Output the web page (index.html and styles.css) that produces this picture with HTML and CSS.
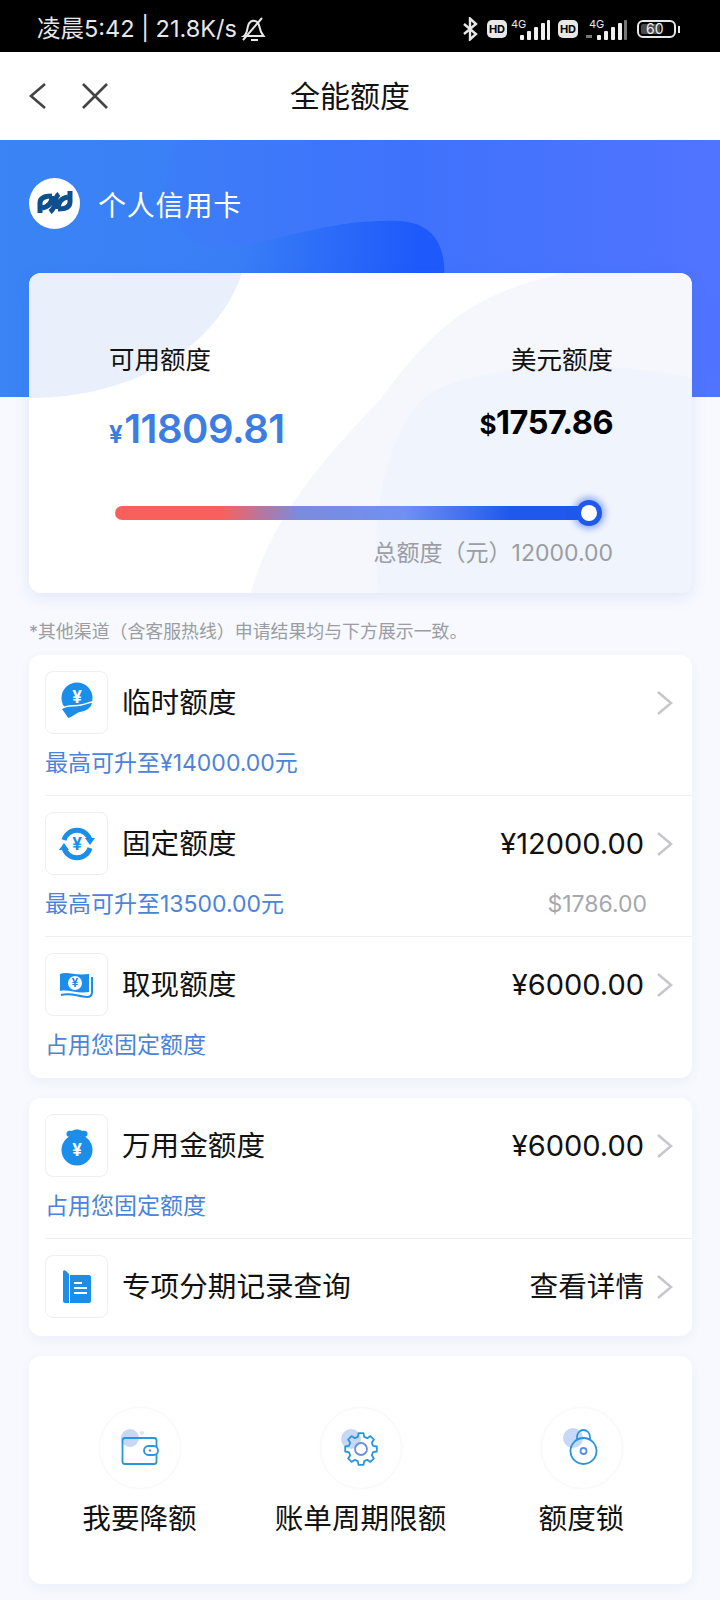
FILE: index.html
```html
<!DOCTYPE html>
<html lang="zh-CN">
<head>
    <meta charset="UTF-8">
    <meta name="viewport" content="width=device-width, initial-scale=1.0">
    <title>全能额度</title>
    <link rel="stylesheet" href="styles.css">
</head>
<body>
    <div class="status-bar">
        <div class="status-left">
            <span>凌晨5:42 | 21.8K/s</span>
            <svg width="26" height="28" viewBox="0 0 26 28" fill="none" stroke="#e8e8e8" stroke-width="2">
                <path d="M3 21c3-2 3-6 4-10 1-4 4-6 7-5 3 .6 4 3 4.500 6 .5 3 1.500 6 4 9z"/>
                <path d="M2 25L21 3M10 25h7"/>
            </svg>
        </div>
        <div class="status-right">
            <svg width="15" height="24" viewBox="0 0 15 24" fill="none" stroke="#e8e8e8" stroke-width="2.400">
                <path d="M1 7l12 10-6 5.500V1.500L13 7 1 17"/>
            </svg>
            <span class="hd">HD</span>
            <svg width="40" height="24" viewBox="0 0 40 24">
                <text x="0" y="11" class="sig-text">4G</text>
                <g fill="#f0f0f0">
                    <rect x="9" y="18" width="4" height="5" rx="1"/>
                    <rect x="16" y="14" width="4" height="9" rx="1"/>
                    <rect x="23" y="10" width="4" height="13" rx="1"/>
                    <rect x="30" y="6" width="4" height="17" rx="1"/>
                    <rect x="36" y="3" width="3" height="20" rx="1"/>
                </g>
            </svg>
            <span class="hd hd-second">HD</span>
            <svg width="42" height="24" viewBox="0 0 42 24">
                <text x="3" y="11" class="sig-text">4G</text>
                <rect x="0" y="18" width="6" height="3" fill="#777"/>
                <g fill="#f0f0f0">
                    <rect x="11" y="18" width="4" height="5" rx="1"/>
                    <rect x="18" y="14" width="4" height="9" rx="1"/>
                    <rect x="25" y="10" width="4" height="13" rx="1"/>
                    <rect x="32" y="6" width="4" height="17" rx="1"/>
                </g>
                <rect x="38" y="3" width="3" height="20" rx="1" fill="#777"/>
            </svg>
            <div class="battery"><span>60</span></div>
            <i class="battery-nub"></i>
        </div>
    </div>

    <div class="nav">
        <svg class="nav-icon" width="20" height="28" viewBox="0 0 20 28" fill="none" stroke="#444" stroke-width="2.600">
            <path d="M17 2L3 14l14 12"/>
        </svg>
        <svg class="nav-icon nav-close" width="28" height="28" viewBox="0 0 28 28" fill="none" stroke="#444" stroke-width="2.600">
            <path d="M2 2l24 24M26 2L2 26"/>
        </svg>
        <h1>全能额度</h1>
    </div>

    <div class="hero">
        <svg class="hero-shape" width="720" height="257" viewBox="0 0 720 257">
            <defs>
                <linearGradient id="blob" gradientUnits="userSpaceOnUse" x1="165" y1="0" x2="720" y2="0">
                    <stop offset="0" stop-color="#3c7df8"/>
                    <stop offset="0.45" stop-color="#3f72fc"/>
                    <stop offset="1" stop-color="#5174ff"/>
                </linearGradient>
            </defs>
            <path d="M177 0C160 30 166 70 178 88c15 20 40 22 62 18 45-8 100-28 160-25 38 3 50 30 42 75V257H720V0z" fill="url(#blob)"/>
        </svg>
        <div class="hero-title">
            <svg width="51" height="51" viewBox="0 0 51 51">
                <circle cx="25.500" cy="25.500" r="25.500" fill="#fff"/>
                <g fill="none" stroke="#0e4f8e" stroke-width="5">
                    <path d="M11 35V25C11 20 15 18 23 18"/>
                    <path d="M23 18C23 25 19 29 13 30"/>
                    <path d="M30 16C24 20 29 28 21 34"/>
                    <path d="M41 13V24C41 29 37 31 29 31"/>
                    <path d="M29 31C29 24 33 20 39 19"/>
                </g>
            </svg>
            <span>个人信用卡</span>
        </div>
    </div>

    <div class="quota-card">
        <svg class="quota-bg" width="663" height="320" viewBox="0 0 663 320">
            <path d="M0 0H213C190 70 110 125 0 125z" fill="#e9f0fb"/>
            <path d="M663 0H536C440 20 400 60 350 128 290 190 240 250 222 320H663z" fill="#f5f7fd"/>
            <path d="M663 105C580 85 440 90 395 125 355 165 340 250 350 320H663z" fill="#f0f4fc"/>
        </svg>
        <div class="quota-top">
            <div>
                <p class="quota-label">可用额度</p>
                <p class="quota-amount"><small>¥</small>11809.81</p>
            </div>
            <div class="quota-right">
                <p class="quota-label">美元额度</p>
                <p class="quota-usd"><small>$</small>1757.86</p>
            </div>
        </div>
        <div class="slider"><i class="slider-thumb"></i></div>
        <p class="quota-total">总额度（元）12000.00</p>
    </div>

    <p class="note">*其他渠道（含客服热线）申请结果均与下方展示一致。</p>

    <div class="card">
        <div class="row">
            <div class="row-main">
                <div class="icon-box">
                    <svg width="63" height="63" viewBox="0 0 63 63">
                        <circle cx="32" cy="27" r="15.500" fill="#1a8ee9"/>
                        <path d="M16 38c6-5 14-2 20-4 5-1 9-3 12-3-1 7-8 10-14 11-3 1-7 5-11 6-2-3-4-6-7-10z" fill="#1a8ee9" stroke="#fff" stroke-width="1.500"/>
                        <text x="32" y="32" class="yen">¥</text>
                    </svg>
                </div>
                <span class="row-title">临时额度</span>
                <svg class="chevron" width="18" height="26" viewBox="0 0 18 26" fill="none" stroke="#c5c7cd" stroke-width="2.500"><path d="M2 2l13 11L2 24"/></svg>
            </div>
            <div class="row-sub"><span>最高可升至¥14000.00元</span></div>
        </div>
        <div class="row">
            <div class="row-main">
                <div class="icon-box">
                    <svg width="63" height="63" viewBox="0 0 63 63">
                        <g fill="none" stroke="#1a8ee9" stroke-width="5">
                            <path d="M19 28a13.500 13.500 0 0 1 26 0"/>
                            <path d="M45 36a13.500 13.500 0 0 1-26 0"/>
                        </g>
                        <path d="M40 26h10l-5 7zM14 38h10l-5-7z" fill="#1a8ee9"/>
                        <text x="32" y="38" class="yen yen-blue">¥</text>
                    </svg>
                </div>
                <span class="row-title">固定额度</span>
                <span class="row-value">¥12000.00</span>
                <svg class="chevron" width="18" height="26" viewBox="0 0 18 26" fill="none" stroke="#c5c7cd" stroke-width="2.500"><path d="M2 2l13 11L2 24"/></svg>
            </div>
            <div class="row-sub"><span>最高可升至13500.00元</span><span class="row-usd">$1786.00</span></div>
        </div>
        <div class="row">
            <div class="row-main">
                <div class="icon-box">
                    <svg width="63" height="63" viewBox="0 0 63 63">
                        <path d="M15 21c8-3 14 2 29 0v18c-12 2-20-3-29-1z" fill="#1a8ee9"/>
                        <path d="M47 24v15c0 4-2 5-5 5-8 0-16-5-26-2" fill="none" stroke="#1a8ee9" stroke-width="2"/>
                        <circle cx="30" cy="30" r="7" fill="#fff"/>
                        <text x="30" y="34" class="yen yen-small">¥</text>
                    </svg>
                </div>
                <span class="row-title">取现额度</span>
                <span class="row-value">¥6000.00</span>
                <svg class="chevron" width="18" height="26" viewBox="0 0 18 26" fill="none" stroke="#c5c7cd" stroke-width="2.500"><path d="M2 2l13 11L2 24"/></svg>
            </div>
            <div class="row-sub"><span>占用您固定额度</span></div>
        </div>
    </div>

    <div class="card">
        <div class="row">
            <div class="row-main">
                <div class="icon-box">
                    <svg width="63" height="63" viewBox="0 0 63 63">
                        <circle cx="32" cy="36" r="15.500" fill="#1a8ee9"/>
                        <path d="M22 22c-2-5 2-6 5-5 2-2 8-2 10 0 3-1 7 0 5 5-3 2-17 2-20 0z" fill="#1a8ee9"/>
                        <text x="32" y="42" class="yen">¥</text>
                    </svg>
                </div>
                <span class="row-title">万用金额度</span>
                <span class="row-value">¥6000.00</span>
                <svg class="chevron" width="18" height="26" viewBox="0 0 18 26" fill="none" stroke="#c5c7cd" stroke-width="2.500"><path d="M2 2l13 11L2 24"/></svg>
            </div>
            <div class="row-sub"><span>占用您固定额度</span></div>
        </div>
        <div class="row row-plain">
            <div class="row-main">
                <div class="icon-box">
                    <svg width="63" height="63" viewBox="0 0 63 63">
                        <path d="M18 17c0-2 2-2 3-1l3 3v29h-4c-1 0-2-1-2-2z" fill="#1a8ee9"/>
                        <path d="M25 20h19c1 0 2 1 2 2v24c0 1-1 2-2 2H25z" fill="#1a8ee9"/>
                        <path d="M29 28h8M29 33h13M29 38h13" stroke="#fff" stroke-width="2"/>
                    </svg>
                </div>
                <span class="row-title">专项分期记录查询</span>
                <span class="row-link">查看详情</span>
                <svg class="chevron" width="18" height="26" viewBox="0 0 18 26" fill="none" stroke="#c5c7cd" stroke-width="2.500"><path d="M2 2l13 11L2 24"/></svg>
            </div>
        </div>
    </div>

    <div class="card actions">
        <div class="action">
            <div class="action-circle">
                <svg width="80" height="80" viewBox="0 0 80 80">
                    <circle cx="30" cy="30" r="9" fill="#c6d8f6"/>
                    <circle cx="42" cy="25" r="2" fill="#d5e2f8"/>
                    <path d="M25 30h29c1.500 0 2.500 1 2.500 2.500V53.500c0 1.500-1 2.500-2.500 2.500H25c-1.500 0-2.500-1-2.500-2.500V32.500c0-1.500 1-2.500 2.500-2.500z" fill="none" stroke="#2a95dc" stroke-width="1.800"/>
                    <rect x="44" y="38" width="14" height="9" rx="4.500" fill="#fff" stroke="#2a95dc" stroke-width="1.800"/>
                    <circle cx="50" cy="42.500" r="1.200" fill="#5a8ee0"/>
                </svg>
            </div>
            <span>我要降额</span>
        </div>
        <div class="action">
            <div class="action-circle">
                <svg width="80" height="80" viewBox="0 0 80 80">
                    <circle cx="30" cy="31" r="10" fill="#c6d8f6"/>
                    <g transform="translate(40 41)" fill="none" stroke-width="1.800">
                        <polygon stroke="#2a95dc" stroke-linejoin="round" points="-3.200,-12.100 -2.500,-15.800 2.500,-15.800 3.200,-12.100 6.250,-10.800 9.400,-12.900 12.900,-9.400 10.800,-6.250 12.100,-3.200 15.800,-2.500 15.800,2.500 12.100,3.200 10.800,6.250 12.900,9.400 9.400,12.900 6.250,10.800 3.200,12.100 2.500,15.800 -2.500,15.800 -3.200,12.100 -6.250,10.800 -9.400,12.900 -12.900,9.400 -10.800,6.250 -12.100,3.200 -15.800,2.500 -15.800,-2.500 -12.100,-3.200 -10.800,-6.250 -12.900,-9.400 -9.400,-12.900 -6.250,-10.800"/>
                        <circle r="6" stroke="#6a8fe0"/>
                    </g>
                </svg>
            </div>
            <span>账单周期限额</span>
        </div>
        <div class="action">
            <div class="action-circle">
                <svg width="80" height="80" viewBox="0 0 80 80">
                    <circle cx="31" cy="30" r="10" fill="#c6d8f6"/>
                    <path d="M35 31v-2c0-4 3-7 6.500-7s6.500 3 6.500 7v2" fill="none" stroke="#2a95dc" stroke-width="1.800"/>
                    <circle cx="41.500" cy="43" r="13" fill="none" stroke="#2a95dc" stroke-width="1.800"/>
                    <circle cx="41.500" cy="43" r="3" fill="none" stroke="#5a8ee0" stroke-width="1.800"/>
                </svg>
            </div>
            <span>额度锁</span>
        </div>
    </div>
</body>
</html>
```

FILE: styles.css
```css
* {
    box-sizing: border-box;
}

body {
    font-family: Inter, 'Noto Sans CJK SC', sans-serif;
    width: 720px;
    height: 1600px;
    margin: 0;
    overflow: hidden;
    background-color: #f7f9fe;
    color: #111;
}

p,
h1 {
    margin: 0;
    font-weight: normal;
}

.status-bar {
    display: flex;
    align-items: center;
    justify-content: space-between;
    height: 52px;
    padding: 14px 40px 8px 37px;
    background-color: #000;
    color: #e8e8e8;
}

.status-left {
    display: flex;
    align-items: center;
    gap: 4px;
    font-size: 23.500px;
    line-height: 30px;
    white-space: nowrap;
}

.status-right {
    display: flex;
    align-items: center;
}

.hd {
    width: 20px;
    height: 18px;
    margin: 0 4px 0 9px;
    border-radius: 5px;
    background-color: #e8e8e8;
    color: #000;
    font-size: 11px;
    font-weight: 700;
    line-height: 18px;
    text-align: center;
}

.hd-second {
    margin: 0 8px 0 7px;
}

.sig-text {
    font-size: 11px;
    fill: #e8e8e8;
}

.battery {
    width: 39px;
    height: 18px;
    margin-left: 9px;
    padding: 2px;
    border: 2px solid #e8e8e8;
    border-radius: 6px;
}

.battery span {
    display: block;
    height: 10px;
    background-color: #4a4a4a;
    border-radius: 2px;
    width: 60%;
    color: #eee;
    font-size: 14px;
    line-height: 10px;
    text-indent: 5px;
    white-space: nowrap;
}

.battery-nub {
    width: 2px;
    height: 7px;
    margin-left: 2px;
    background-color: #e8e8e8;
}

.nav {
    position: relative;
    display: flex;
    align-items: center;
    height: 88px;
    padding-left: 28px;
    background-color: #fff;
}

.nav-close {
    margin-left: 33px;
}

.nav h1 {
    position: absolute;
    left: 0;
    right: 20px;
    font-size: 30px;
    line-height: 40px;
    text-align: center;
}

.hero {
    position: relative;
    height: 257px;
    padding: 38px 0 0 29px;
    background: linear-gradient(90deg, #3a84f5, #3a7ef6 33%, #1e5afb 58%);
}

.hero-shape {
    position: absolute;
    left: 0;
    top: 0;
}

.hero-title {
    position: relative;
    display: flex;
    align-items: center;
    gap: 18px;
    color: #fff;
    font-size: 28px;
    letter-spacing: 0.8px;
}

.quota-card {
    position: relative;
    height: 320px;
    margin: -124px 28px 0 29px;
    padding: 67px 79px 0 80px;
    overflow: hidden;
    background-color: #fff;
    border-radius: 12px;
    box-shadow: 0 4px 16px rgba(60, 100, 200, 0.12);
}

.quota-bg {
    position: absolute;
    left: 0;
    top: 0;
}

.quota-top {
    position: relative;
    display: flex;
    justify-content: space-between;
}

.quota-right {
    text-align: right;
}

.quota-label {
    font-size: 25.500px;
    line-height: 40px;
}

.quota-amount {
    margin-top: 19px;
    color: #3b7de3;
    font-size: 40px;
    font-weight: 600;
    line-height: 60px;
    letter-spacing: -0.5px;
    white-space: nowrap;
}

.quota-amount small {
    font-size: 24px;
    font-weight: 700;
    margin-right: 2px;
}

.quota-usd {
    margin-top: 14px;
    color: #000;
    font-size: 32.500px;
    font-weight: 700;
    line-height: 58px;
    letter-spacing: -0.5px;
    white-space: nowrap;
}

.quota-usd small {
    font-size: 26px;
}

.slider {
    position: relative;
    height: 14px;
    margin: 41px 16px 0 6px;
    border-radius: 7px;
    background: linear-gradient(90deg, #f9605c 22%, #7b8bdc 38%, #6f90f2 60%, #2058ee 82%);
}

.slider-thumb {
    position: absolute;
    right: 0;
    top: -1px;
    width: 16px;
    height: 16px;
    border-radius: 50%;
    background-color: #fff;
    box-shadow: 0 0 0 5px #1f58ee, 0 0 6px 8px rgba(31, 88, 238, 0.45);
}

.quota-total {
    position: relative;
    margin-top: 16px;
    color: #9a9da3;
    font-size: 23px;
    line-height: 34px;
    text-align: right;
    white-space: nowrap;
}

.note {
    margin: 26px 0 0 29px;
    color: #9a9da3;
    font-size: 17.900px;
    line-height: 26px;
}

.card {
    margin: 10px 28px 0 29px;
    padding-left: 16px;
    background-color: #fff;
    border-radius: 12px;
    box-shadow: 0 4px 12px rgba(60, 90, 170, 0.06);
}

.card + .card {
    margin-top: 20px;
}

.row {
    height: 141px;
    padding-top: 16px;
    border-bottom: 1px solid #eeeff2;
}

.row:last-child {
    border-bottom: none;
}

.row-plain {
    height: 97px;
}

.row-main {
    display: flex;
    align-items: center;
    height: 63px;
    padding-right: 18px;
}

.icon-box {
    flex: none;
    width: 63px;
    height: 63px;
    border: 1px solid #eeeff3;
    border-radius: 8px;
    margin-right: 14px;
    overflow: hidden;
}

.icon-box svg {
    display: block;
    margin: -1px;
}

.yen {
    fill: #fff;
    font-size: 17px;
    font-weight: 700;
    text-anchor: middle;
}

.yen-blue {
    fill: #1a8ee9;
}

.yen-small {
    fill: #1a8ee9;
    font-size: 12px;
}

.row-title {
    flex: 1;
    font-size: 28.600px;
    line-height: 40px;
}

.row-value {
    font-size: 29px;
    line-height: 40px;
    color: #111;
}

.row-link {
    font-size: 28.600px;
    line-height: 40px;
}

.chevron {
    margin-left: 12px;
}

.row-sub {
    display: flex;
    justify-content: space-between;
    margin-top: 14px;
    padding-right: 45px;
    color: #4c83da;
    font-size: 23px;
    line-height: 30px;
}

.row-usd {
    color: #a5a8ae;
}

.actions {
    display: grid;
    grid-template-columns: repeat(3, 1fr);
    height: 228px;
    margin-top: 20px;
    padding: 52px 0 0;
}

.action {
    display: flex;
    flex-direction: column;
    align-items: center;
    font-size: 28.600px;
    line-height: 40px;
}

.action-circle {
    width: 80px;
    height: 80px;
    margin-bottom: 11px;
    border-radius: 50%;
    background-color: #fff;
    box-shadow: 0 0 2px 1px rgba(90, 110, 200, 0.06);
}

.action-circle svg {
    display: block;
}
```
